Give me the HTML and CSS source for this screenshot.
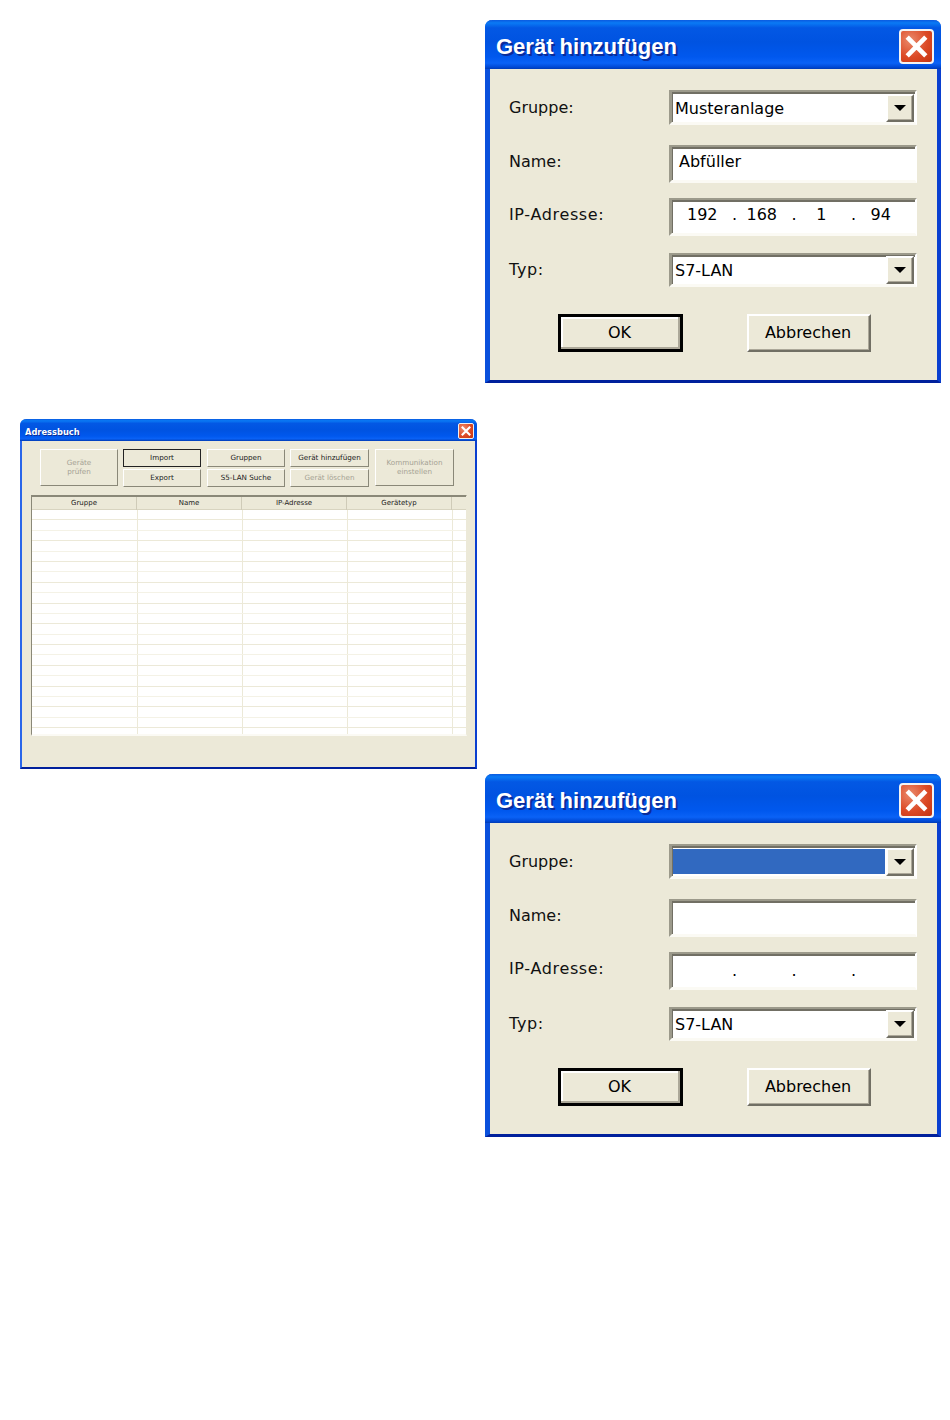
FILE: index.html
```html
<!DOCTYPE html>
<html lang="de">
<head>
<meta charset="utf-8">
<title>Adressbuch</title>
<link rel="stylesheet" href="styles.css">
</head>
<body>
<main class="page">

<section class="win win-large win-first">
  <header class="titlebar">
    <h2 class="title">Gerät hinzufügen</h2>
    <span class="close"><svg viewBox="0 0 20 20"><path d="M4 4L16 16M16 4L4 16"/></svg></span>
  </header>
  <div class="form">
    <div class="row row-a"><label class="label">Gruppe:</label>
      <div class="field combo"><span class="value">Musteranlage</span><span class="drop"><i class="arrow"></i></span></div></div>
    <div class="row row-b"><label class="label label-up">Name:</label>
      <div class="field"><span class="value value-pad">Abfüller</span></div></div>
    <div class="row row-c"><label class="label label-up label-wide">IP-Adresse:</label>
      <div class="field ip"><span class="octet">192</span><span class="dot">.</span><span class="octet">168</span><span class="dot">.</span><span class="octet">1</span><span class="dot">.</span><span class="octet">94</span></div></div>
    <div class="row row-d"><label class="label label-wide">Typ:</label>
      <div class="field combo"><span class="value">S7-LAN</span><span class="drop"><i class="arrow"></i></span></div></div>
    <div class="actions"><button class="btn btn-default">OK</button><button class="btn">Abbrechen</button></div>
  </div>
</section>

<section class="win win-small">
  <header class="titlebar-s">
    <h2 class="title-s">Adressbuch</h2>
    <span class="close-s"><svg viewBox="0 0 20 20"><path d="M4 4L16 16M16 4L4 16"/></svg></span>
  </header>
  <div class="tools">
    <button class="sbtn tall off">Geräte<br>prüfen</button>
    <div class="stack s1"><button class="sbtn focus">Import</button><button class="sbtn">Export</button></div>
    <div class="stack s2"><button class="sbtn">Gruppen</button><button class="sbtn">S5-LAN Suche</button></div>
    <div class="stack s3"><button class="sbtn">Gerät hinzufügen</button><button class="sbtn off">Gerät löschen</button></div>
    <button class="sbtn tall tall-last off">Kommunikation<br>einstellen</button>
  </div>
  <div class="table">
    <div class="thead"><span>Gruppe</span><span>Name</span><span>IP-Adresse</span><span>Gerätetyp</span><span></span></div>
    <div class="tbody">
      <div class="tr"></div><div class="tr"></div><div class="tr"></div><div class="tr"></div><div class="tr"></div>
      <div class="tr"></div><div class="tr"></div><div class="tr"></div><div class="tr"></div><div class="tr"></div>
      <div class="tr"></div><div class="tr"></div><div class="tr"></div><div class="tr"></div><div class="tr"></div>
      <div class="tr"></div><div class="tr"></div><div class="tr"></div><div class="tr"></div><div class="tr"></div>
      <div class="tr"></div><div class="tr"></div><div class="tr"></div>
    </div>
  </div>
</section>

<section class="win win-large win-last">
  <header class="titlebar">
    <h2 class="title">Gerät hinzufügen</h2>
    <span class="close"><svg viewBox="0 0 20 20"><path d="M4 4L16 16M16 4L4 16"/></svg></span>
  </header>
  <div class="form">
    <div class="row row-a"><label class="label">Gruppe:</label>
      <div class="field combo"><span class="selected"></span><span class="drop"><i class="arrow"></i></span></div></div>
    <div class="row row-b"><label class="label label-up">Name:</label>
      <div class="field"></div></div>
    <div class="row row-c"><label class="label label-up label-wide">IP-Adresse:</label>
      <div class="field ip ip-empty"><span class="octet"></span><span class="dot">.</span><span class="octet"></span><span class="dot">.</span><span class="octet"></span><span class="dot">.</span><span class="octet"></span></div></div>
    <div class="row row-d"><label class="label label-wide">Typ:</label>
      <div class="field combo"><span class="value">S7-LAN</span><span class="drop"><i class="arrow"></i></span></div></div>
    <div class="actions"><button class="btn btn-default">OK</button><button class="btn">Abbrechen</button></div>
  </div>
</section>

</main>
</body>
</html>
```
FILE: styles.css
```css
* { box-sizing: border-box; }
html, body { margin: 0; background: #fff; }
body { font-family: "DejaVu Sans", sans-serif; color: #000; }
.page { width: 950px; height: 1420px; padding-top: 20px; display: flex; flex-direction: column; overflow: hidden; }
button { font-family: inherit; color: inherit; margin: 0; padding: 0; }

/* windows */
.win { background: #ece9d8; border-radius: 7px 7px 0 0; display: flex; flex-direction: column; border-style: solid; border-top: 0; }
.win-large { width: 456px; height: 363px; margin-left: 485px; border-width: 0 4px 3px 5px; border-color: #0831d9 #0a3fd0 #00209c #0a50dc; }
.win-first { margin-bottom: 36px; }
.win-last { margin-top: 5px; }
.win-small { width: 457px; height: 350px; margin-left: 20px; border-width: 0 2px 2px 2px; border-color: #0a3fd0 #0a3fd0 #00209c #2a66ea; }

/* title bars */
.titlebar { height: 49px; margin: 0 -4px 0 -5px; padding: 4px 7px 0 11px; display: flex; align-items: center; justify-content: space-between; border-radius: 7px 7px 0 0;
  background: linear-gradient(to bottom, #0a5ae0 0, #0a7af5 6%, #0358e4 16%, #0053e1 45%, #0058ee 75%, #0a62f6 88%, #0049d6 96%, #003bb5 100%); }
.title { margin: 0; font-family: "Liberation Sans", sans-serif; font-size: 22px; line-height: 26px; font-weight: 700; color: #fff; text-shadow: 2px 2px 0 #0a2c9a; }
.close { width: 35px; height: 35px; border: 2px solid #f4f4f4; border-radius: 4px; background: radial-gradient(circle at 30% 30%, #ea8a6c, #dc4a26 55%, #c43310); display: flex; }
.close svg, .close-s svg { width: 100%; height: 100%; fill: none; stroke: #fff; stroke-width: 3; }

.titlebar-s { height: 22px; margin: 0 -2px; padding: 2px 3px 0 5px; display: flex; align-items: center; justify-content: space-between; border-radius: 6px 6px 0 0;
  background: linear-gradient(to bottom, #0a5ae0 0, #0a7af5 8%, #0358e4 20%, #0053e1 50%, #0058ee 78%, #0a62f6 90%, #003bb5 100%); }
.title-s { margin: 1px 0 0; font-size: 8.3px; line-height: 12px; font-weight: 700; color: #fff; text-shadow: 1px 1px 0 #0a2c9a; }
.close-s { width: 16px; height: 16px; border: 1px solid #f0f0f0; border-radius: 2px; background: radial-gradient(circle at 30% 30%, #ea8a6c, #dc4a26 55%, #c43310); display: flex; }

/* form */
.form { padding: 21px 0 0 19px; }
.row { display: flex; align-items: center; }
.row-a { height: 35px; margin-bottom: 20px; }
.row-b { height: 38px; margin-bottom: 15px; }
.row-c { height: 38px; margin-bottom: 17px; }
.row-d { height: 34px; margin-bottom: 27px; }
.label { width: 160px; font-size: 16px; line-height: 20px; color: #111; }
.label-up { padding-bottom: 4px; }
.label-wide { letter-spacing: 0.65px; }
.field { width: 248px; height: 100%; background: #fff; border-style: solid; border-width: 2px 2px 3px 3px; border-color: #9c9a8b #fff #fbfaf4 #9c9a8b; box-shadow: inset 1px 2px 0 #716f64; display: flex; align-items: center; }
.value { font-size: 16px; line-height: 22px; padding: 3px 0 0 3px; white-space: nowrap; flex: 1; }
.value-pad { padding: 0 0 4px 7px; }
.combo { position: relative; justify-content: space-between; padding-right: 1px; }
.drop { width: 28px; height: 28px; background: #ece9d8; border-style: solid; border-width: 2px; border-color: #fff #716f64 #716f64 #fff; box-shadow: inset -1px -1px 0 #aca899; display: flex; align-items: center; justify-content: center; flex: none; margin-left: auto; margin-top: 1px; }
.arrow { width: 0; height: 0; border-style: solid; border-width: 6px 6px 0 6px; border-color: #000 transparent transparent; }
.selected { flex: none; width: 212px; height: 25px; margin-left: 1px; margin-top: 1px; background: #3169c0; }
.ip { padding: 0 0 3px 3px; font-size: 16px; line-height: 22px; }
.ip-empty { padding-bottom: 0; padding-top: 1px; }
.octet { flex: none; width: 59.5px; padding-right: 5px; min-height: 22px; text-align: center; }
.dot { flex: none; width: 0; display: flex; justify-content: center; }
.actions { display: flex; gap: 64px; padding-left: 49px; }
.btn { width: 125px; height: 38px; font-size: 16px; padding: 0 2px 2px 0; background: #ece9d8; border-style: solid; border-width: 2px; border-color: #fff #716f64 #716f64 #fff; box-shadow: inset -1px -1px 0 #aca899; }
.btn:last-child { width: 124px; }
.btn-default { border: 3px solid #000; box-shadow: inset -2px -2px 0 #aca899, inset 2px 2px 0 #fff; }

/* small window */
.tools { display: flex; gap: 5px; padding: 8px 0 0 18px; height: 54px; }
.stack { display: flex; flex-direction: column; gap: 2px; width: 78px; }
.s2 { margin-left: 1px; }
.s3 { width: 79px; }
.sbtn { display: block; width: 100%; height: 18px; font-size: 7.2px; line-height: 9px; padding-bottom: 2px; color: #222; background: #ece9d8; border-style: solid; border-width: 1px; border-color: #fff #8a8878 #8a8878 #fff; white-space: nowrap; }
.tall { width: 78px; height: 37px; flex: none; padding-bottom: 2px; }
.tall-last { width: 79px; margin-left: 1px; }
.off { color: #a5a294; }
.focus { border-color: #222; }
.table { width: 436px; height: 241px; margin: 0 0 0 9px; background: #fff; border-style: solid; border-width: 1px 1px 2px 1px; border-color: #8a8878 #ece9d8 #fbfaf4 #8a8878; overflow: hidden; display: flex; flex-direction: column; }
.thead { height: 14px; flex: none; display: grid; grid-template-columns: 105px 105px 105px 105px 15px; background: #ece9d8; border-top: 1px solid #8a8878; border-bottom: 1px solid #d8d4c0; }
.thead span { font-size: 7px; line-height: 13px; text-align: center; border-right: 1px solid #cfcbb8; color: #222; }
.tbody { flex: 1; overflow: hidden; background: linear-gradient(to right, transparent 105px, #ece9d8 105px, #ece9d8 106px, transparent 106px, transparent 210px, #ece9d8 210px, #ece9d8 211px, transparent 211px, transparent 315px, #ece9d8 315px, #ece9d8 316px, transparent 316px, transparent 420px, #ece9d8 420px, #ece9d8 421px, transparent 421px); }
.tr { height: 10.4px; border-bottom: 1px solid #ece9d8; }
.tr:nth-child(even) { border-bottom-color: #f4f2e6; }
```
